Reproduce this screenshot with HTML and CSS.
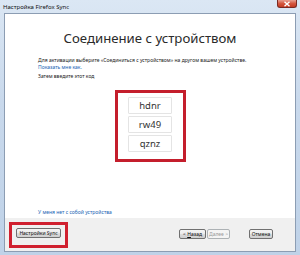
FILE: index.html
```html
<!DOCTYPE html>
<html lang="ru">
<head>
    <meta charset="UTF-8">
    <title>Настройка Firefox Sync</title>
    <link rel="stylesheet" href="styles.css">
</head>
<body>
    <div class="window">
        <div class="titlebar">
            <span class="title">Настройка Firefox Sync</span>
            <span class="close">
                <svg width="8" height="6" viewBox="0 0 8 6"><path d="M1.5 0.8 L6.5 5.2 M6.5 0.8 L1.5 5.2" stroke="#fff" stroke-width="1.4"/></svg>
            </span>
        </div>
        <div class="client">
            <div class="main">
                <h1>Соединение с устройством</h1>
                <div class="intro">
                    <p>Для активации выберите «Соединиться с устройством» на другом вашем устройстве.</p>
                    <a class="link" href="#">Показать мне как.</a>
                    <p class="then">Затем введите этот код</p>
                </div>
                <div class="code-box">
                    <div class="code">hdnr</div>
                    <div class="code">rw49</div>
                    <div class="code">qznz</div>
                </div>
                <a class="link no-device" href="#">У меня нет с собой устройства</a>
            </div>
            <div class="footer">
                <div class="highlight">
                    <button class="btn">Настройки Sync</button>
                </div>
                <div class="nav">
                    <button class="btn btn-back">&lt; <u>Н</u>азад</button>
                    <button class="btn btn-next" disabled>Далее &gt;</button>
                    <button class="btn btn-cancel">Отмена</button>
                </div>
            </div>
        </div>
    </div>
</body>
</html>
```

FILE: styles.css
```css
body {
    margin: 0;
    font-family: "Noto Sans", "Open Sans", sans-serif;
}
.window {
    width: 300px;
    height: 255px;
    display: flex;
    flex-direction: column;
    background: linear-gradient(180deg, #dbe7f4 0%, #c9d9ec 40%, #bfd2e8 100%);
    overflow: hidden;
}
.titlebar {
    height: 13px;
    display: flex;
    align-items: flex-start;
    position: relative;
}
.title {
    font-size: 6px;
    line-height: 8px;
    margin: 3px 0 0 3px;
    color: #111;
}
.close {
    position: absolute;
    right: 3px;
    top: 0;
    width: 20px;
    height: 8px;
    border: 1px solid #7a2a22;
    border-top: none;
    border-radius: 0 0 3px 3px;
    background: linear-gradient(180deg, #e8a091 0%, #d4573f 50%, #c43b22 100%);
    box-sizing: border-box;
    display: flex;
    align-items: center;
    justify-content: center;
}
.client {
    flex: 1;
    margin: 0 4px 3px 4px;
    border: 1px solid #8c9db3;
    display: flex;
    flex-direction: column;
    background: #fff;
}
.main {
    flex: 1;
    display: flex;
    flex-direction: column;
    align-items: center;
}
h1 {
    margin: 15px 0 0;
    font-size: 13.2px;
    line-height: 18px;
    font-weight: 400;
    color: #2a2a2a;
}
.intro {
    align-self: stretch;
    padding-left: 33px;
    margin-top: 10px;
    font-size: 5px;
    line-height: 6.5px;
    color: #222;
}
.intro p {
    margin: 0;
}
.link {
    display: block;
    color: #1a64b4;
    text-decoration: none;
    font-size: 5px;
    line-height: 6.5px;
}
.then {
    margin-top: 3px !important;
}
.code-box {
    margin-top: 10px;
    width: 71px;
    height: 72px;
    box-sizing: border-box;
    border: 3px solid #c41e2c;
    display: flex;
    flex-direction: column;
    align-items: center;
    padding-top: 4px;
    gap: 2px;
}
.code {
    width: 44px;
    height: 17px;
    box-sizing: border-box;
    border: 1px solid #e4e4e4;
    border-radius: 1px;
    font-size: 9.5px;
    line-height: 15px;
    text-align: center;
    color: #333;
}
.no-device {
    align-self: flex-start;
    margin: auto 0 3px 33px;
}
.footer {
    height: 33px;
    background: #f0f0f0;
    display: flex;
    align-items: flex-start;
    padding: 4px 22px 0 4px;
    box-sizing: border-box;
}
.highlight {
    width: 59px;
    height: 26px;
    box-sizing: border-box;
    border: 3px solid #d0202f;
    padding: 3px 0 0 4px;
    display: flex;
    align-items: flex-start;
}
.btn {
    height: 10px;
    padding: 0;
    border: 1px solid #707070;
    border-radius: 2px;
    background: linear-gradient(180deg, #f4f4f4 0%, #ebebeb 50%, #dcdcdc 51%, #cfcfcf 100%);
    font-family: "Noto Sans", sans-serif;
    font-size: 5px;
    line-height: 8px;
    color: #111;
    white-space: nowrap;
}
.highlight .btn {
    width: 45px;
}
.nav {
    margin: 7px 0 0 auto;
    display: flex;
}
.btn-back {
    width: 27px;
}
.btn-next {
    width: 23px;
    margin-left: 1px;
    color: #9a9a9a;
    border-color: #adb2b5;
    background: #f4f4f4;
}
.btn-cancel {
    width: 24px;
    margin-left: 19px;
}
```
